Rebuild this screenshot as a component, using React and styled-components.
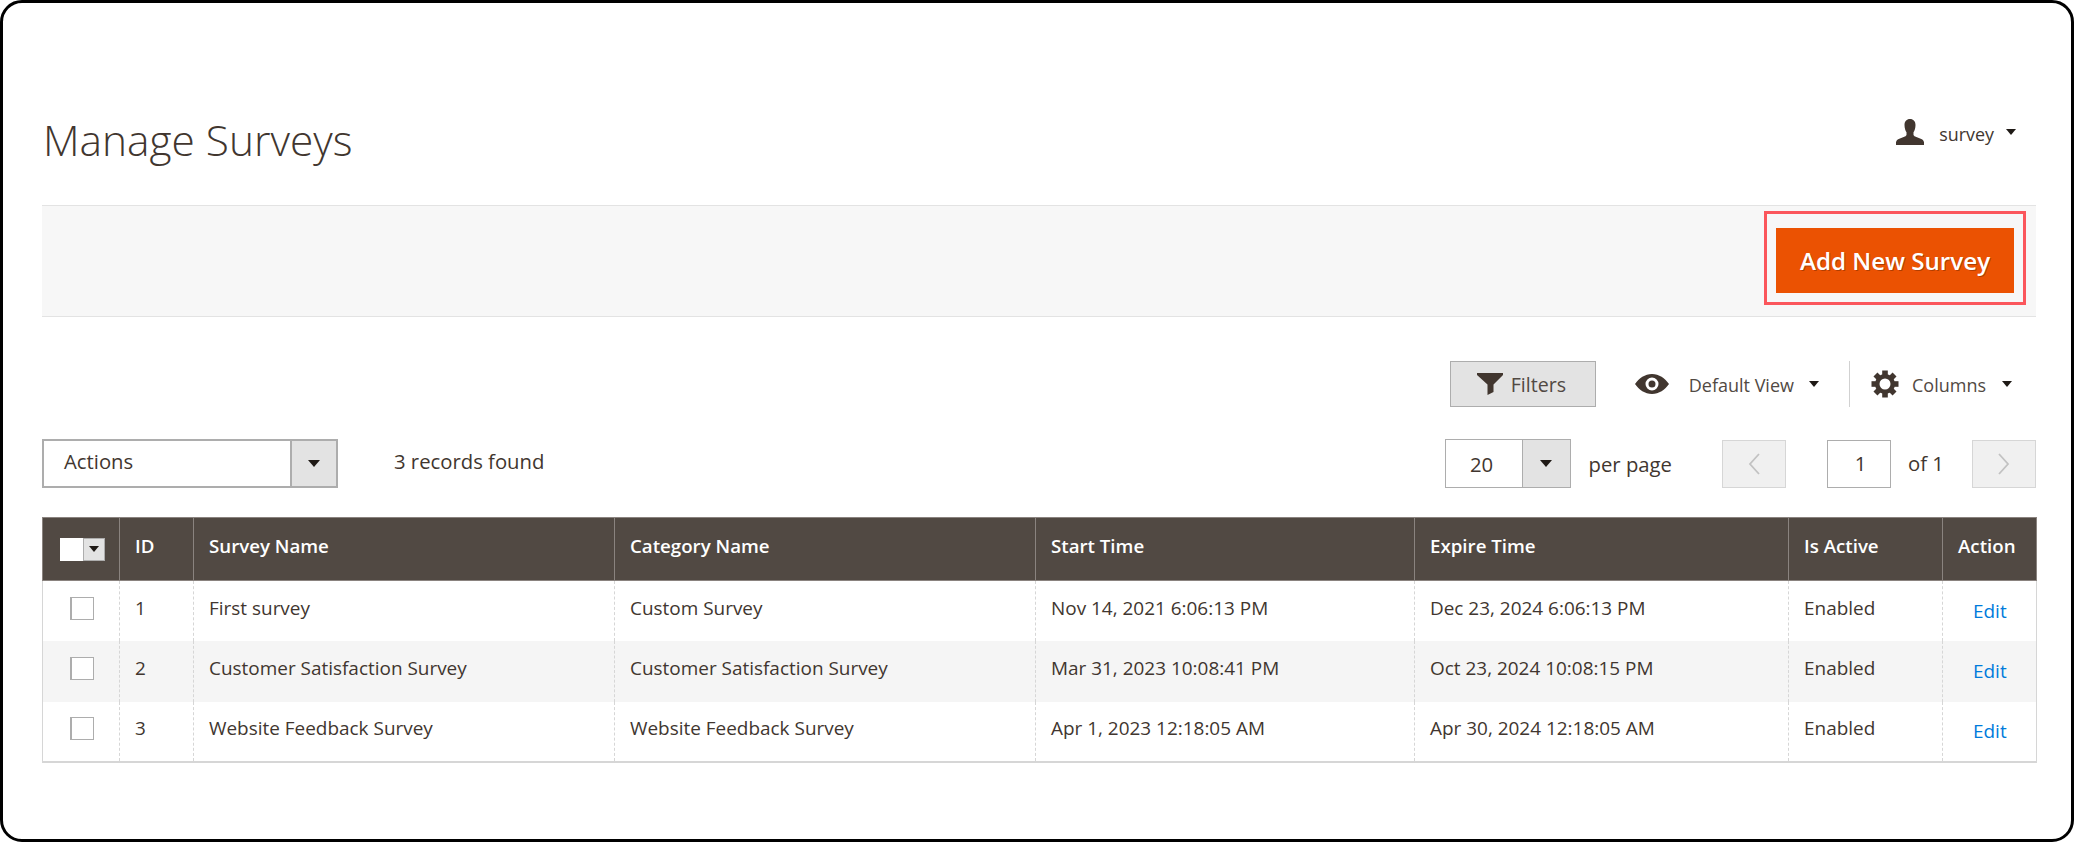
import styled, { createGlobalStyle } from "styled-components"

const Global = createGlobalStyle`
    html, body {
        margin: 0;
        padding: 0;
        background: #ffffff;
    }
    * {
        box-sizing: border-box;
    }
`

const Frame = styled.div`
    width: 2074px;
    height: 842px;
    border: 3px solid #000;
    border-radius: 22px;
    padding: 0 35px 0 39px;
    background: #fff;
    font-family: "Open Sans", sans-serif;
    font-size: 20.3px;
    color: #41362f;
    overflow: hidden;
`

const Header = styled.div`
    height: 202px;
    display: flex;
    justify-content: space-between;
`

const Title = styled.h1`
    margin: 111px 0 0 1px;
    font-size: 42.4px;
    line-height: 52px;
    font-weight: 300;
    color: #41362f;
`

const User = styled.div`
    display: flex;
    align-items: center;
    height: 30px;
    margin: 114px 20px 0 0;
    font-size: 17.9px;
`

const UserName = styled.span`
    margin: 0 12px 0 15px;
    padding-top: 4px;
`

const Caret = styled.span`
    display: inline-block;
    border-style: solid;
    border-width: ${p => p.$size || 7}px ${p => (p.$size || 7) - 1}px 0;
    border-color: #1f1a16 transparent transparent;
`

const ActionBar = styled.div`
    height: 112px;
    background: #f7f7f7;
    border-top: 1px solid #e3e3e3;
    border-bottom: 1px solid #e3e3e3;
    display: flex;
    justify-content: flex-end;
    padding: 5px 10px 0 0;
`

const Highlight = styled.div`
    width: 262px;
    height: 94px;
    border: 3px solid #fb565c;
    display: flex;
    align-items: flex-start;
    justify-content: center;
    padding-top: 14px;
`

const PrimaryButton = styled.button`
    width: 238px;
    height: 65px;
    background: #eb5202;
    border: 0;
    color: #fff;
    font-family: inherit;
    font-size: 24.2px;
    font-weight: 600;
    text-shadow: 1px 1px 0 rgba(0, 0, 0, 0.25);
`

const ControlsRow = styled.div`
    height: 46px;
    margin-top: 44px;
    display: flex;
    justify-content: flex-end;
    align-items: center;
`

const FiltersButton = styled.div`
    width: 146px;
    height: 46px;
    background: #e3e3e3;
    border: 1px solid #adadad;
    display: flex;
    align-items: center;
    padding-left: 26px;
    gap: 8px;
    font-size: 19.6px;
    color: #514943;
`

const ViewSwitch = styled.div`
    display: flex;
    align-items: center;
    margin-left: 39px;
    font-size: 18px;
    color: #514943;
`

const ControlLabel = styled.span`
    margin: 0 15px 0 20px;
    padding-top: 1px;
`

const Separator = styled.div`
    width: 1px;
    height: 46px;
    background: #d1d1d1;
    margin-left: 30px;
`

const ColumnsSwitch = styled.div`
    display: flex;
    align-items: center;
    margin: 0 24px 0 21px;
    font-size: 18px;
    color: #514943;
`

const ColumnsLabel = styled.span`
    margin: 0 16px 0 13px;
    padding-top: 1px;
`

const PagerRow = styled.div`
    height: 49px;
    margin-top: 32px;
    display: flex;
    align-items: center;
`

const SelectBox = styled.div`
    width: ${p => p.$width}px;
    height: 49px;
    border: ${p => (p.$thin ? 1 : 2)}px solid #adadad;
    background: #fff;
    display: flex;
    align-items: stretch;
`

const SelectValue = styled.div`
    flex: 1;
    display: flex;
    align-items: center;
    justify-content: ${p => (p.$center ? "center" : "flex-start")};
    padding: 0 ${p => (p.$center ? "4px" : "0")} ${p => (p.$center ? "0" : "5px")} ${p => (p.$center ? "0" : "20px")};
`

const SelectArrow = styled.div`
    width: ${p => p.$width}px;
    background: #e3e3e3;
    border-left: ${p => (p.$thin ? 1 : 2)}px solid #adadad;
    display: flex;
    align-items: center;
    justify-content: center;
`

const Records = styled.div`
    margin-left: 56px;
    padding-bottom: 5px;
`

const Spacer = styled.div`
    flex: 1;
`

const PerPage = styled.div`
    margin: 0 50px 0 18px;
`

const PageButton = styled.div`
    width: 64px;
    height: 48px;
    background: #f0f0f0;
    border: 1px solid #d6d6d6;
    display: flex;
    align-items: center;
    justify-content: center;
`

const PageInput = styled.div`
    width: 64px;
    height: 48px;
    margin-left: 41px;
    padding: 0 0 2px 3px;
    border: 1px solid #adadad;
    background: #fff;
    display: flex;
    align-items: center;
    justify-content: center;
`

const PageOf = styled.div`
    width: 81px;
    padding: 0 0 2px 17px;
`

const Table = styled.table`
    width: 1994px;
    margin-top: 29px;
    border-collapse: collapse;
    table-layout: fixed;
    border-left: 1px solid #d6d6d6;
    border-right: 1px solid #d6d6d6;
    border-bottom: 2px solid #d6d6d6;
`

const HeadCell = styled.th`
    height: 63px;
    background: #514943;
    border: 1px solid #8a837f;
    padding: 0 15px 8px;
    text-align: left;
    color: #fff;
    font-size: 18.7px;
    font-weight: 600;
    white-space: nowrap;
`

const Row = styled.tr`
    background: ${p => (p.$alt ? "#f5f5f5" : "#fff")};
`

const Cell = styled.td`
    height: 60.5px;
    padding: 0 15px 6px;
    border-left: 1px dashed #d6d6d6;
    border-right: 1px dashed #d6d6d6;
    font-size: 18.95px;
    white-space: nowrap;
    color: #41362f;
`

const CheckCell = styled(Cell)`
    padding: 0 0 6px 27px;
`

const Check = styled.div`
    width: 24px;
    height: 23px;
    background: #fff;
    border: 1px solid #adadad;
    border-left-width: 2px;
`

const HeadCheck = styled.div`
    width: 45px;
    height: 23px;
    margin: 8px 0 0 2px;
    display: flex;
    background: #fff;
`

const HeadCheckArrow = styled.div`
    width: 22px;
    margin-left: auto;
    background: #e3e3e3;
    border: 1px solid #adadad;
    display: flex;
    align-items: center;
    justify-content: center;
`

const EditLink = styled.a`
    display: block;
    margin: 6px 0 0 15px;
    color: #007bdb;
`

const rows = [
    { id: 1, name: "First survey", category: "Custom Survey", start: "Nov 14, 2021 6:06:13 PM", expire: "Dec 23, 2024 6:06:13 PM" },
    { id: 2, name: "Customer Satisfaction Survey", category: "Customer Satisfaction Survey", start: "Mar 31, 2023 10:08:41 PM", expire: "Oct 23, 2024 10:08:15 PM" },
    { id: 3, name: "Website Feedback Survey", category: "Website Feedback Survey", start: "Apr 1, 2023 12:18:05 AM", expire: "Apr 30, 2024 12:18:05 AM" },
]

const columns = [77, 74, 421, 421, 379, 374, 154, 94]

const UserIcon = () => (
    <svg width="28" height="26" viewBox="0 0 28 26">
        <path fill="#41362f" d="M14 0c3.400 0 5.500 2.400 5.500 6 0 3-.9 5.800-2 7.200V16l1 1.200 6.800 2.800c1.500.6 2.200 1.400 2.700 3.200V26H0v-2.800c.5-1.800 1.200-2.600 2.700-3.200l6.800-2.800 1-1.200v-2.800c-1.100-1.400-2-4.200-2-7.200 0-3.600 2.100-6 5.500-6z" />
    </svg>
)

const FunnelIcon = () => (
    <svg width="26" height="22" viewBox="0 0 26 22">
        <path fill="#41362f" d="M0 0h26v2L16.500 11.500V19l-6 3V11.500L0 2z" />
    </svg>
)

const EyeIcon = () => (
    <svg width="34" height="20" viewBox="0 0 34 20">
        <path fill="#41362f" fillRule="evenodd" d="M17 0c7 0 13 4.200 17 10-4 5.800-10 10-17 10S4 15.800 0 10C4 4.200 10 0 17 0zm0 3.500a6.500 6.500 0 1 0 0 13 6.500 6.500 0 0 0 0-13zm0 3a3.500 3.500 0 1 1 0 7 3.500 3.500 0 0 1 0-7z" />
    </svg>
)

const GearIcon = () => (
    <svg width="28" height="28" viewBox="0 0 28 28">
        <g fill="#41362f">
            {[0, 45, 90, 135].map(a => (
                <rect key={a} x="11.200" y="0.500" width="5.600" height="27" transform={`rotate(${a} 14 14)`} />
            ))}
            <circle cx="14" cy="14" r="10" />
        </g>
        <circle cx="14" cy="14" r="5.500" fill="#fff" />
    </svg>
)

const ChevronIcon = ({ flip }) => (
    <svg width="12" height="22" viewBox="0 0 12 22" style={{ transform: flip ? "scaleX(-1)" : "none" }}>
        <path fill="none" stroke="#c2c2c2" strokeWidth="1.800" d="M11 1 2 11l9 10" />
    </svg>
)

const App = () => {
    return (
        <Frame>
            <Global />
            <Header>
                <Title>Manage Surveys</Title>
                <User>
                    <UserIcon />
                    <UserName>survey</UserName>
                    <Caret $size={6} />
                </User>
            </Header>
            <ActionBar>
                <Highlight>
                    <PrimaryButton>Add New Survey</PrimaryButton>
                </Highlight>
            </ActionBar>
            <ControlsRow>
                <FiltersButton>
                    <FunnelIcon />
                    Filters
                </FiltersButton>
                <ViewSwitch>
                    <EyeIcon />
                    <ControlLabel>Default View</ControlLabel>
                    <Caret $size={6} />
                </ViewSwitch>
                <Separator />
                <ColumnsSwitch>
                    <GearIcon />
                    <ColumnsLabel>Columns</ColumnsLabel>
                    <Caret $size={6} />
                </ColumnsSwitch>
            </ControlsRow>
            <PagerRow>
                <SelectBox $width={296}>
                    <SelectValue>Actions</SelectValue>
                    <SelectArrow $width={46}>
                        <Caret />
                    </SelectArrow>
                </SelectBox>
                <Records>3 records found</Records>
                <Spacer />
                <SelectBox $width={126} $thin>
                    <SelectValue $center>20</SelectValue>
                    <SelectArrow $width={48} $thin>
                        <Caret />
                    </SelectArrow>
                </SelectBox>
                <PerPage>per page</PerPage>
                <PageButton>
                    <ChevronIcon />
                </PageButton>
                <PageInput>1</PageInput>
                <PageOf>of 1</PageOf>
                <PageButton>
                    <ChevronIcon flip />
                </PageButton>
            </PagerRow>
            <Table>
                <colgroup>
                    {columns.map((w, i) => (
                        <col key={i} style={{ width: w }} />
                    ))}
                </colgroup>
                <thead>
                    <tr>
                        <HeadCell>
                            <HeadCheck>
                                <HeadCheckArrow>
                                    <Caret $size={6} />
                                </HeadCheckArrow>
                            </HeadCheck>
                        </HeadCell>
                        <HeadCell>ID</HeadCell>
                        <HeadCell>Survey Name</HeadCell>
                        <HeadCell>Category Name</HeadCell>
                        <HeadCell>Start Time</HeadCell>
                        <HeadCell>Expire Time</HeadCell>
                        <HeadCell>Is Active</HeadCell>
                        <HeadCell>Action</HeadCell>
                    </tr>
                </thead>
                <tbody>
                    {rows.map((r, i) => (
                        <Row key={r.id} $alt={i === 1}>
                            <CheckCell>
                                <Check />
                            </CheckCell>
                            <Cell>{r.id}</Cell>
                            <Cell>{r.name}</Cell>
                            <Cell>{r.category}</Cell>
                            <Cell>{r.start}</Cell>
                            <Cell>{r.expire}</Cell>
                            <Cell>Enabled</Cell>
                            <Cell>
                                <EditLink>Edit</EditLink>
                            </Cell>
                        </Row>
                    ))}
                </tbody>
            </Table>
        </Frame>
    )
}

export default App
